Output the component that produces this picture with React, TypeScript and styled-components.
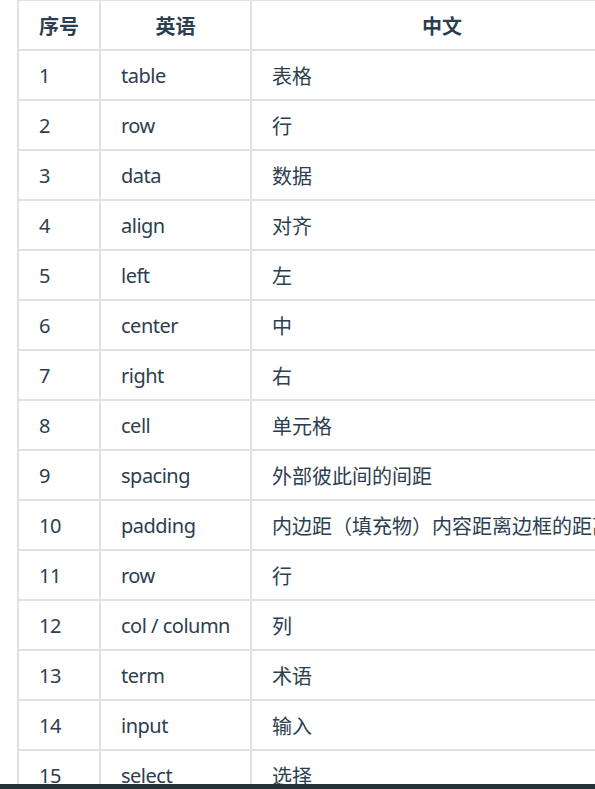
import { FC } from 'react';
import styled, { createGlobalStyle } from 'styled-components';

const rows: [string, string][] = [
	['table', '表格'],
	['row', '行'],
	['data', '数据'],
	['align', '对齐'],
	['left', '左'],
	['center', '中'],
	['right', '右'],
	['cell', '单元格'],
	['spacing', '外部彼此间的间距'],
	['padding', '内边距（填充物）内容距离边框的距离'],
	['row', '行'],
	['col / column', '列'],
	['term', '术语'],
	['input', '输入'],
	['select', '选择'],
];

const GlobalStyle = createGlobalStyle`
	html, body {
		margin: 0;
		padding: 0;
		background: #fff;
		overflow: hidden;
		height: 100%;
	}
	body {
		font-family: 'Noto Sans', 'Noto Sans CJK SC', sans-serif;
		color: #2c3e50;
	}
`;

const App: FC = () => {
	return (
		<>
			<GlobalStyle />
			<Page>
				<Table>
					<thead>
						<tr>
							<Th>序号</Th>
							<Th>英语</Th>
							<Th>中文</Th>
						</tr>
					</thead>
					<tbody>
						{rows.map(([en, zh], i) => (
							<tr key={i}>
								<Td $latin>{i + 1}</Td>
								<Td $latin>{en}</Td>
								<Td>{zh}</Td>
							</tr>
						))}
					</tbody>
				</Table>
			</Page>
			<BottomBar />
		</>
	);
};

const Page = styled.div`
	padding-left: 17px;
	margin-top: -1px;
`;

const Table = styled.table`
	border-collapse: collapse;
	font-size: 20px;
	white-space: nowrap;
`;

const Th = styled.th`
	height: 48px;
	padding: 0 20px;
	border: 2px solid #dfe2e5;
	font-weight: 700;
	text-align: center;
`;

const Td = styled.td<{ $latin?: boolean }>`
	height: 48px;
	padding: 0 20px;
	border: 2px solid #dfe2e5;
	text-align: left;
	font-weight: 400;
	letter-spacing: ${(p) => (p.$latin ? '-0.5px' : '0')};
`;

const BottomBar = styled.div`
	position: fixed;
	left: 0;
	right: 0;
	bottom: 0;
	height: 5px;
	background: #243136;
`;

export default App;
